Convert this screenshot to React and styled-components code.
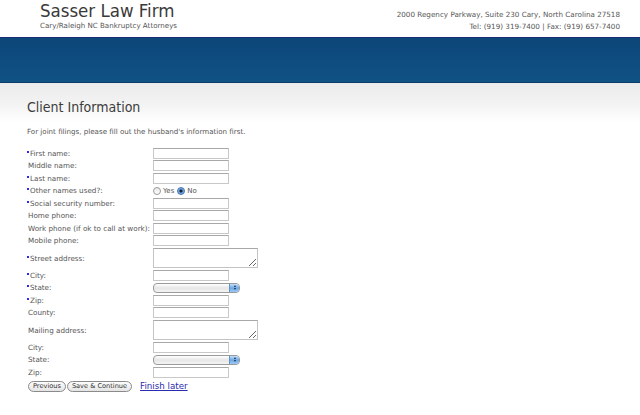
import React from "react";
import styled, { createGlobalStyle } from "styled-components";

const GlobalStyle = createGlobalStyle`
  html, body {
    margin: 0;
    padding: 0;
    background: #fff;
  }
  body {
    font-family: "DejaVu Sans", Verdana, sans-serif;
    color: #555;
  }
`;

const Page = styled.div`
  width: 640px;
  height: 415px;
  overflow: hidden;
  background: #fff;
`;

const Header = styled.header`
  height: 37px;
  display: flex;
  justify-content: space-between;
  padding: 0 20px 0 40px;
  box-sizing: border-box;
`;

const Brand = styled.div`
  display: flex;
  flex-direction: column;
`;

const FirmName = styled.h1`
  margin: 0;
  font-family: "DejaVu Sans Condensed", "DejaVu Sans", sans-serif;
  font-weight: normal;
  font-size: 18.5px;
  line-height: 21px;
  color: #3a3a3a;
`;

const Tagline = styled.div`
  font-size: 7.1px;
  color: #555;
`;

const Contact = styled.div`
  text-align: right;
  font-size: 7.2px;
  line-height: 12px;
  color: #555;
  padding-top: 9px;
`;

const Band = styled.div`
  height: 44px;
  border-top: 1px solid #1e2a78;
  border-bottom: 1px solid #0b3d6a;
  background: linear-gradient(#0d4679, #105284);
`;

const TitleArea = styled.div`
  height: 39px;
  padding-left: 27px;
  display: flex;
  align-items: center;
  background: linear-gradient(#ebebeb, #f4f4f4 60%, #fff);
`;

const Title = styled.h2`
  margin: 9px 0 0;
  font-family: "DejaVu Sans Condensed", "DejaVu Sans", sans-serif;
  font-weight: normal;
  font-size: 14px;
  color: #3c3c3c;
`;

const Content = styled.div`
  padding: 5px 0 0 27px;
`;

const Intro = styled.p`
  margin: 0 0 11px;
  font-size: 7.1px;
  color: #555;
`;

const Form = styled.form`
  display: grid;
  grid-template-columns: 126px auto;
  align-items: center;
`;

const Label = styled.label`
  height: ${(p) => p.$h || 12.5}px;
  display: flex;
  align-items: center;
  font-size: 7.2px;
  color: #555;
  white-space: nowrap;
  padding-left: 1px;
`;

const Req = styled.span`
  display: inline-block;
  width: 2px;
  height: 2px;
  background: #2a2aee;
  margin-right: 1px;
  margin-left: -1px;
  margin-top: -3px;
`;

const Field = styled.div`
  height: ${(p) => p.$h || 12.5}px;
  display: flex;
  align-items: center;
`;

const TextInput = styled.input`
  width: 76px;
  height: 11px;
  box-sizing: border-box;
  margin: 0;
  padding: 0;
  border: 1px solid #c8c8c8;
  border-top-color: #a8a8a8;
  background: #fff;
`;

const TextArea = styled.textarea`
  width: 105px;
  height: 20px;
  box-sizing: border-box;
  margin: 0;
  padding: 0;
  border: 1px solid #c4c4c4;
  border-top-color: #a8a8a8;
  resize: both;
`;

const SelectBox = styled.div`
  width: 87px;
  height: 10px;
  box-sizing: border-box;
  border: 1px solid #9a9a9a;
  border-radius: 4px;
  background: linear-gradient(#fff, #e6e6e6 50%, #f4f4f4);
  display: flex;
  justify-content: flex-end;
  overflow: hidden;
`;

const SelectArrow = styled.span`
  width: 9px;
  height: 100%;
  background: linear-gradient(#c4e0fa, #6aa7e6 50%, #9ccaf6);
  border-left: 1px solid #6b8fb8;
  display: flex;
  flex-direction: column;
  align-items: center;
  justify-content: center;
  gap: 1px;
`;

const Tri = styled.span`
  width: 0;
  height: 0;
  border-left: 1.5px solid transparent;
  border-right: 1.5px solid transparent;
  ${(p) =>
    p.$up ? "border-bottom: 2px solid #1d2b45;" : "border-top: 2px solid #1d2b45;"}
`;

const RadioGroup = styled.div`
  display: flex;
  align-items: center;
  font-size: 7px;
  color: #555;
`;

const Radio = styled.span`
  width: 8px;
  height: 8px;
  box-sizing: border-box;
  border-radius: 50%;
  border: 1px solid ${(p) => (p.$on ? "#4672a8" : "#9a9a9a")};
  background: ${(p) =>
    p.$on
      ? "radial-gradient(circle, #1a2230 0 1.3px, #5f9de0 1.8px, #9cc8f4)"
      : "linear-gradient(#e8e8e8, #fff)"};
  margin: 0 2px 0 0;
`;

const RadioText = styled.span`
  margin-right: 3px;
`;

const Actions = styled.div`
  display: flex;
  align-items: center;
  margin-top: 2px;
  padding-left: 1px;
`;

const Button = styled.button`
  height: 11px;
  box-sizing: border-box;
  padding: 0 4px;
  margin: 0 1px 0 0;
  border: 1px solid #8a8a8a;
  border-radius: 6px;
  background: linear-gradient(#fdfdfd, #e4e4e4);
  font-family: "DejaVu Sans", sans-serif;
  font-size: 6.6px;
  color: #333;
  line-height: 9px;
`;

const LaterLink = styled.a`
  margin-left: 7px;
  font-family: "DejaVu Sans", sans-serif;
  font-size: 8.7px;
  color: #2b2bb0;
  text-decoration: underline;
`;

const rows = [
  { label: "First name:", req: true, type: "text" },
  { label: "Middle name:", type: "text" },
  { label: "Last name:", req: true, type: "text" },
  { label: "Other names used?:", req: true, type: "radio" },
  { label: "Social security number:", req: true, type: "text" },
  { label: "Home phone:", type: "text" },
  { label: "Work phone (if ok to call at work):", type: "text" },
  { label: "Mobile phone:", type: "text" },
  { label: "Street address:", req: true, type: "area" },
  { label: "City:", req: true, type: "text" },
  { label: "State:", req: true, type: "select" },
  { label: "Zip:", req: true, type: "text" },
  { label: "County:", type: "text" },
  { label: "Mailing address:", type: "area" },
  { label: "City:", type: "text" },
  { label: "State:", type: "select" },
  { label: "Zip:", type: "text" },
];

function Control({ type }) {
  if (type === "area") return <TextArea />;
  if (type === "select")
    return (
      <SelectBox>
        <SelectArrow>
          <Tri $up />
          <Tri />
        </SelectArrow>
      </SelectBox>
    );
  if (type === "radio")
    return (
      <RadioGroup>
        <Radio />
        <RadioText>Yes</RadioText>
        <Radio $on />
        <RadioText>No</RadioText>
      </RadioGroup>
    );
  return <TextInput type="text" />;
}

export default function App() {
  return (
    <Page>
      <GlobalStyle />
      <Header>
        <Brand>
          <FirmName>Sasser Law Firm</FirmName>
          <Tagline>Cary/Raleigh NC Bankruptcy Attorneys</Tagline>
        </Brand>
        <Contact>
          <div>2000 Regency Parkway, Suite 230 Cary, North Carolina 27518</div>
          <div>Tel: (919) 319-7400 | Fax: (919) 657-7400</div>
        </Contact>
      </Header>
      <Band />
      <TitleArea>
        <Title>Client Information</Title>
      </TitleArea>
      <Content>
        <Intro>For joint filings, please fill out the husband's information first.</Intro>
        <Form>
          {rows.map((r, i) => {
            const h = r.type === "area" ? 22 : 12.5;
            return (
              <React.Fragment key={i}>
                <Label $h={h}>
                  {r.req && <Req />}
                  {r.label}
                </Label>
                <Field $h={h}>
                  <Control type={r.type} />
                </Field>
              </React.Fragment>
            );
          })}
        </Form>
        <Actions>
          <Button type="button">Previous</Button>
          <Button type="button">Save &amp; Continue</Button>
          <LaterLink href="#">Finish later</LaterLink>
        </Actions>
      </Content>
    </Page>
  );
}
